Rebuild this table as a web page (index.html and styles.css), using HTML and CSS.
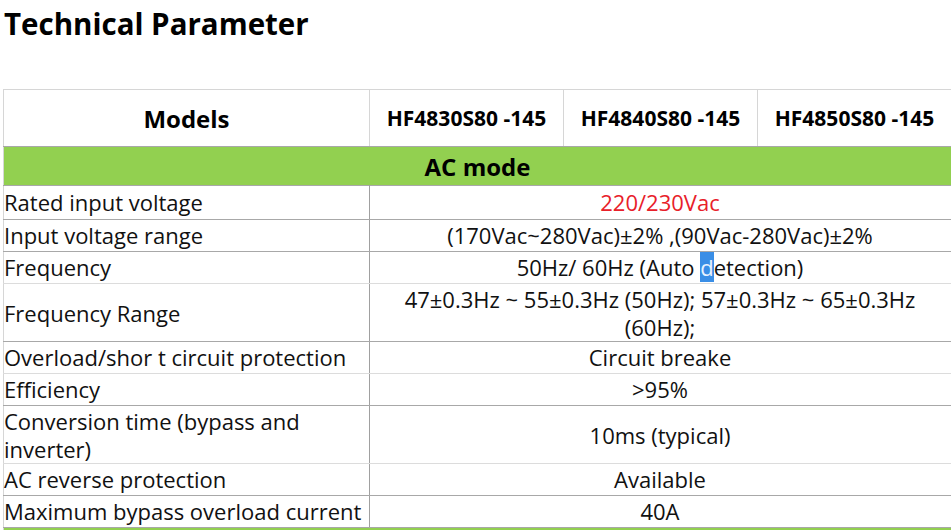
FILE: index.html
```html
<!DOCTYPE html>
<html lang="en">
<head>
<meta charset="utf-8">
<title>Technical Parameter</title>
<link rel="stylesheet" href="styles.css">
</head>
<body>
<div class="page">
  <h2 class="title">Technical Parameter</h2>
  <table class="spec">
    <colgroup>
      <col class="c-name">
      <col class="c-model">
      <col class="c-model">
      <col class="c-model">
    </colgroup>
    <thead>
      <tr class="head">
        <th class="models">Models</th>
        <th>HF4830S80 -145</th>
        <th>HF4840S80 -145</th>
        <th>HF4850S80 -145</th>
      </tr>
    </thead>
    <tbody>
      <tr class="section"><td colspan="4">AC mode</td></tr>
      <tr class="first"><td class="name">Rated input voltage</td><td colspan="3" class="val red">220/230Vac</td></tr>
      <tr><td class="name">Input voltage range</td><td colspan="3" class="val">(170Vac~280Vac)±2% ,(90Vac-280Vac)±2%</td></tr>
      <tr class="light"><td class="name">Frequency</td><td colspan="3" class="val">50Hz/ 60Hz (Auto <span class="sel">d</span>etection)</td></tr>
      <tr class="two"><td class="name">Frequency Range</td><td colspan="3" class="val">47±0.3Hz ~ 55±0.3Hz (50Hz); 57±0.3Hz ~ 65±0.3Hz<br>(60Hz);</td></tr>
      <tr class="light"><td class="name">Overload/shor t circuit protection</td><td colspan="3" class="val">Circuit breake</td></tr>
      <tr><td class="name">Efficiency</td><td colspan="3" class="val">&gt;95%</td></tr>
      <tr class="light two"><td class="name">Conversion time (bypass and inverter)</td><td colspan="3" class="val">10ms (typical)</td></tr>
      <tr><td class="name">AC reverse protection</td><td colspan="3" class="val">Available</td></tr>
      <tr><td class="name">Maximum bypass overload current</td><td colspan="3" class="val">40A</td></tr>
      <tr class="section tail"><td colspan="4"></td></tr>
    </tbody>
  </table>
</div>
</body>
</html>
```

FILE: styles.css
```css
html, body {
  margin: 0;
  padding: 0;
  background: #ffffff;
}

body {
  font-family: "Open Sans", "Liberation Sans", sans-serif;
  color: #111111;
}

.page {
  padding: 0 2px 0 3px;
}

.title {
  margin: 0;
  padding: 0 0 0 1px;
  font-size: 29.5px;
  line-height: 48px;
  font-weight: 700;
  color: #000000;
}

.spec {
  margin-top: 41px;
  width: 946px;
  border-collapse: collapse;
  table-layout: fixed;
  border: 1px solid #d6d6d6;
  border-bottom: none;
  font-size: 22px;
}

.c-name { width: 366px; }
.c-model { width: 194px; }

.spec th {
  height: 56px;
  padding: 0 1px;
  font-weight: 700;
  font-size: 21px;
  color: #000000;
  text-align: center;
  border-left: 1px solid #a8a8a8;
  border-bottom: 1px solid #a8a8a8;
  border-top: 1px solid #d6d6d6;
  border-right: 1px solid #d6d6d6;
}

.spec th.models {
  font-size: 24px;
  border-left: 1px solid #d6d6d6;
}

.spec td {
  padding: 2px 1px 2px 0;
  line-height: 27px;
  border-top: 1px solid #a8a8a8;
  border-bottom: 1px solid #a8a8a8;
  border-right: 1px solid #d6d6d6;
  vertical-align: middle;
}

.spec td.name {
  text-align: left;
  border-right: 1px solid #a0a0a0;
}

.spec td.val {
  text-align: center;
}

.spec tr.first td {
  padding-top: 3px;
  padding-bottom: 3px;
}

.spec tr.two td {
  line-height: 28px;
  padding-top: 1px;
  padding-bottom: 0;
}

.spec tr.light td {
  border-bottom-color: #dcdcdc;
}

.spec tr.section td {
  background: #92d050;
  text-align: center;
  font-weight: 700;
  font-size: 24px;
  color: #000000;
  height: 34px;
  padding: 2px;
  border-top: none;
  border-bottom: none;
  border-right: 1px solid #d6d6d6;
}

.spec tr.tail td {
  height: 2px;
  padding: 0;
  font-size: 0;
  line-height: 0;
}

.red {
  color: #e8202a;
}

.sel {
  background: #3a8ee6;
  color: #e8f2ff;
}
```
